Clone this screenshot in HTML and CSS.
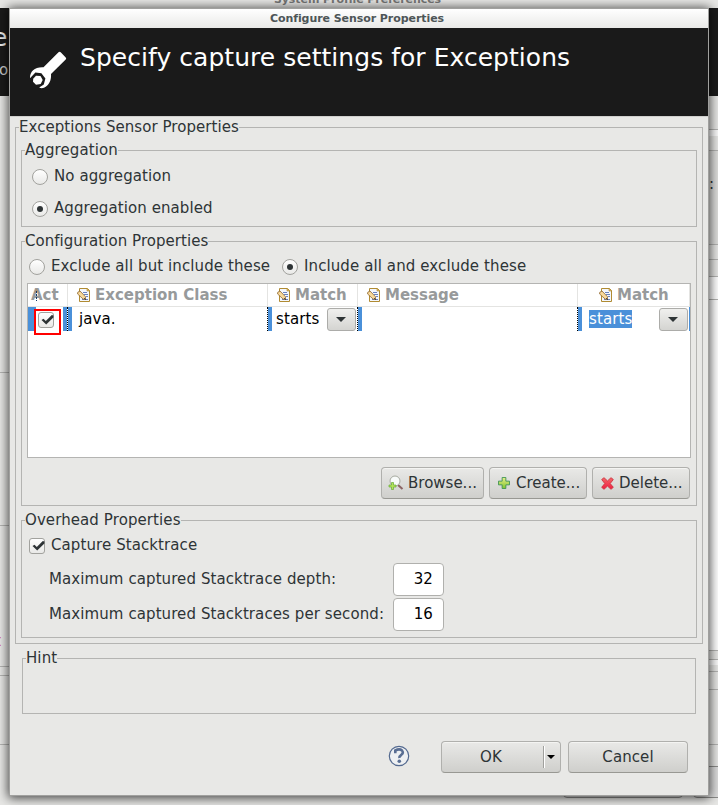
FILE: index.html
```html
<!DOCTYPE html>
<html lang="en">
<head>
<meta charset="utf-8">
<title>Configure Sensor Properties</title>
<link rel="stylesheet" href="styles.css">
</head>
<body>
<svg width="0" height="0" class="defs">
  <defs>
    <linearGradient id="green" x1="0" y1="0" x2="0" y2="1"><stop offset="0" stop-color="#e9ef8c"/><stop offset="1" stop-color="#7fc52c"/></linearGradient>
    <linearGradient id="red" x1="0" y1="0" x2="0" y2="1"><stop offset="0" stop-color="#f4686a"/><stop offset="1" stop-color="#ee1c40"/></linearGradient>
    <symbol id="doc" viewBox="0 0 14 14">
      <path d="M2.500.5h8l2 2v11h-10z" fill="#f4f7fd" stroke="#b08b32"/>
      <path d="M10 .5v2.500h2.500z" fill="#e2bd62" stroke="#b08b32" stroke-width=".6"/>
      <path d="M6 4.500h4M7 6.500h4M9 8.500h2M5 11.500h6" stroke="#6a82bb"/>
      <path d="M.8 4.200l2.200-1.200 5.500 5.800v2.400H6.300L.6 6z" fill="#f8d99a" stroke="#80551d" stroke-width=".7"/>
      <path d="M7.300 10.300l1.400 1.300" stroke="#222"/>
    </symbol>
    <symbol id="check" viewBox="0 0 16 16"><path d="M3.500 8l2-1.200 2.300 2.300 6-6.100 1.600.4v2L8.200 12.500z" fill="#2e3436"/></symbol>
  </defs>
</svg>
<div class="desktop">
  <div class="back-window">
    <div class="back-title">System Profile Preferences</div>
    <div class="back-banner"><span class="back-h">e</span><span class="back-s">o</span></div>
    <div class="back-body">
      <div class="side-left"><i class="l1"></i><i class="l2"></i><b>t</b><i class="l3"></i><i class="l4"></i><i class="l5"></i></div>
      <div class="side-right">
        <i class="r1"></i><i class="r2"></i><i class="r3"></i><i class="r4">:</i><i class="r5"></i><i class="r6"></i><i class="r7"></i><i class="r8"></i><i class="r9"></i><i class="r10"></i><i class="r11"></i><i class="r12"></i><i class="r13"></i><i class="r14"></i>
      </div>
    </div>
    <div class="back-buttons"><span></span><span></span></div>
  </div>

  <main class="dialog">
    <div class="titlebar">Configure Sensor Properties</div>
    <header class="banner">
      <svg class="wrench" width="38" height="38" viewBox="0 0 38 38">
        <path d="M29.500 1.200q1-1 2.200 0l5 5.200q1 1 0 2.200L22 23c.6 6-2 11.500-7 13.700q-2.500.9-4.800-.1l4.600-3.100 1.600-6-4-5.200-6-.7-4 4.200L1 27.200C.8 20 6 15.700 14.500 16.200z" fill="#fff"/>
        <path d="M4.200 27.800L7 24.700l4.500.3 2.200 4-2 4-4.700.7-3-3z" fill="#fff"/>
      </svg>
      <h1>Specify capture settings for Exceptions</h1>
    </header>
    <section class="group sensor">
      <h2>Exceptions Sensor Properties</h2>
      <section class="group aggregation">
        <h2>Aggregation</h2>
        <label class="option"><span class="radio"></span>No aggregation</label>
        <label class="option"><span class="radio on"></span>Aggregation enabled</label>
      </section>
      <section class="group config">
        <h2>Configuration Properties</h2>
        <div class="mode">
          <label class="option"><span class="radio"></span><span class="t1">Exclude all but include these</span></label>
          <label class="option"><span class="radio on"></span>Include all and exclude these</label>
        </div>
        <div class="table">
          <div class="row head">
            <div class="act">Act<svg class="sort" width="5" height="13" viewBox="0 0 5 13"><path d="M.5 4L2.500.5 4.500 4" fill="none" stroke="#c58a45" stroke-width=".6"/><path d="M2.500 2v10" stroke="#173a66" stroke-dasharray="2 1"/></svg></div>
            <div><svg width="14" height="14"><use href="#doc"/></svg>Exception Class</div>
            <div><svg width="14" height="14"><use href="#doc"/></svg>Match</div>
            <div><svg width="14" height="14"><use href="#doc"/></svg>Message</div>
            <div class="last"><svg width="14" height="14"><use href="#doc"/></svg>Match</div>
          </div>
          <div class="row data">
            <div class="c-act"><span class="mark"><span class="checkbox"><svg width="16" height="16"><use href="#check"/></svg></span></span></div>
            <div class="c-class">java.</div>
            <div class="c-match"><span>starts</span><button class="drop"><svg width="10" height="5"><path d="M0 0h10L5 5z"/></svg></button></div>
            <div class="c-msg"></div>
            <div class="c-match2"><span class="selected">starts</span><button class="drop"><svg width="10" height="5"><path d="M0 0h10L5 5z"/></svg></button></div>
          </div>
        </div>
        <div class="actions">
          <button class="btn browse"><svg width="16" height="16" viewBox="0 0 16 16"><path d="M10 10l4.500 4" stroke="#8b6464" stroke-width="2"/><circle cx="7" cy="6" r="5" fill="#f8fbfa" stroke="#a7aaa0"/><path d="M3.500 7.500h2v2.500H8v2H5.500v2.500h-2V12H1v-2h2.500z" fill="#b4e35a" stroke="#66aa38" stroke-width=".7"/></svg><span>Browse...</span></button>
          <button class="btn create"><svg width="12" height="12" viewBox="0 0 13 13"><path d="M4.500.5h4v4h4v4h-4v4h-4v-4h-4v-4h4z" fill="url(#green)" stroke="#409455"/></svg><span>Create...</span></button>
          <button class="btn delete"><svg width="13" height="13" viewBox="0 0 13 13"><path d="M.7 2.500L3 .7l3.500 3.200L10 .7l2.300 1.800L9.200 6.500l3.100 3.800-2.300 2-3.500-3.200L3 12.300l-2.300-2 3.100-3.800z" fill="url(#red)" stroke="#ce3440" stroke-width=".9"/></svg><span>Delete...</span></button>
        </div>
      </section>
      <section class="group overhead">
        <h2>Overhead Properties</h2>
        <label class="option"><span class="checkbox"><svg width="16" height="16"><use href="#check"/></svg></span>Capture Stacktrace</label>
        <div class="fields">
          <label>Maximum captured Stacktrace depth:</label><span class="input">32</span>
          <label>Maximum captured Stacktraces per second:</label><span class="input">16</span>
        </div>
      </section>
    </section>
    <section class="group hint"><h2>Hint</h2></section>
    <footer class="footer">
      <svg class="help" width="22" height="22" viewBox="0 0 22 22"><circle cx="11" cy="11" r="9.700" fill="#eef0f2" stroke="#53698f" stroke-width="1.200"/><path d="M7.300 8.300V5.500q4.200-2.200 6.700 0 2 2.300-.7 4.300-2.100 1.400-1.900 3.200" fill="none" stroke="#596e93" stroke-width="2.600"/><circle cx="11.300" cy="16.200" r="1.800" fill="#596e93"/></svg>
      <button class="btn ok"><span>OK</span><i><svg width="8" height="4"><path d="M0 0h8L4 4z"/></svg></i></button>
      <button class="btn cancel">Cancel</button>
    </footer>
  </main>
</div>
</body>
</html>
```
FILE: styles.css
```css
* { box-sizing: border-box; }
body { margin: 0; width: 718px; height: 805px; overflow: hidden; background: #e7e7e5; color: #2e3436; font: 15px/18px "DejaVu Sans", sans-serif; letter-spacing: .09px; }
svg { display: block; flex: none; }
h1, h2 { margin: 0; font-weight: normal; font-size: inherit; }
button { font: inherit; color: inherit; padding: 0; margin: 0; letter-spacing: inherit; }
.defs { position: absolute; }
.desktop { position: relative; width: 718px; height: 805px; padding: 8px 9px; overflow: hidden; }

/* Window behind the dialog */
.back-window { position: absolute; inset: 0; display: flex; flex-direction: column; }
.back-title { height: 8px; line-height: 0; text-indent: -3px; text-align: center; font-size: 11px; font-weight: bold; color: #777; letter-spacing: -.06px; }
.back-banner { height: 88px; background: #1a1a1a; color: #eee; display: flex; flex-direction: column; }
.back-h { font-size: 25px; line-height: 28px; margin: 16px 0 0 -8px; }
.back-s { line-height: 18px; margin: 9px 0 0 -1px; color: #ccc; }
.back-body { flex: 1; display: flex; justify-content: space-between; min-height: 0; }
.back-body i { display: block; border-bottom: 1px solid #b4b4b2; font-style: normal; }
.side-left { width: 9px; }
.l1 { height: 277px; } .l2 { height: 153px; }
.side-left b { display: block; height: 140px; padding-top: 106px; font-weight: normal; color: #d0364a; text-indent: -5px; }
.side-left .l3 { height: 1px; } .l4 { height: 9px; } .l5 { height: 69px; }
.side-right { width: 10px; }
.r1 { height: 34px; } .side-right .r2 { height: 6px; background: #fafafa; border: 0; } .r3 { height: 15px; }
.r4 { height: 94px; padding-top: 24px; padding-left: 1px; background: #dededc; } .r5 { height: 15px; } .r6 { height: 17px; }
.r7 { height: 23px; background: #fff; } .r8 { height: 351px; background: #fff; } .r9 { height: 9px; }
.side-right .r10 { height: 5px; background: #fafafa; border: 0; } .r11 { height: 7px; } .r12 { height: 18px; } .r13 { height: 55px; } .r14 { height: 23px; }
.back-buttons { display: flex; gap: 10px; height: 39px; padding-left: 563px; }
.back-buttons span { flex: none; width: 120px; height: 32px; border: 1px solid #8c8c8a; border-radius: 4px; background: #ddd; }

/* Dialog */
.dialog { position: relative; width: 700px; height: 788px; border: 1px solid #a0a09e; background: #e8e8e6; box-shadow: 0 1px 10px 1px rgba(0,0,0,.72); }
.titlebar { height: 19px; background: linear-gradient(#fff, #e9e9e7); text-align: center; font-size: 11px; font-weight: bold; line-height: 19px; color: #4d5557; text-indent: -4px; letter-spacing: -.06px; }
.banner { height: 89px; background: #1a1a1a; border-bottom: 1px solid #d0d0ce; display: flex; color: #fff; }
.wrench { margin: 23px 0 0 19px; }
.banner h1 { font-size: 25px; line-height: 30px; margin: 15px 0 0 13px; white-space: nowrap; letter-spacing: .04px; }

.group { border: 1px solid #b4b4b2; }
.group > h2 { width: max-content; height: 18px; line-height: 18px; margin: -10px 0 0 3px; background: #e8e8e6; white-space: nowrap; }
.sensor { width: 688px; height: 517px; margin: 10px 0 0 5px; padding: 0 5px; }
.sensor > h2 { margin-left: -2px; letter-spacing: .05px; }
.aggregation { height: 77px; margin-top: 14px; }
.config { height: 265px; margin-top: 14px; }
.config > h2 { letter-spacing: .04px; }
.overhead { height: 118px; margin-top: 14px; }
.hint { width: 674px; height: 56px; margin: 14px 0 0 12px; }

.option { display: flex; align-items: center; height: 18px; white-space: nowrap; }
.radio { flex: none; width: 16px; height: 16px; margin: 2px 6px 0 0; border: 1px solid #a2a29e; border-radius: 50%; background: linear-gradient(#fff, #e9e9e7); display: grid; place-items: center; }
.on::after { content: ""; width: 6px; height: 6px; border-radius: 50%; background: #2e3436; }
.aggregation .option { margin: 8px 0 0 10px; }
.aggregation .option + .option { margin-top: 14px; }
.mode { display: flex; margin: 7px 0 0 7px; letter-spacing: .1px; }
.mode .t1 { width: 231px; }
.checkbox { flex: none; display: block; width: 16px; height: 16px; border: 1px solid #a2a29e; border-radius: 3px; background: linear-gradient(#fff, #e9e9e7); }
.checkbox svg { margin: -1px; }

.table { width: 664px; height: 175px; margin: 8px 0 0 5px; border: 1px solid #b4b4b2; background: #fff; color: #000; }
.row { display: grid; grid-template-columns: 40px 200px 90px 220px 112px; }
.head { height: 23px; border-bottom: 1px solid #e4e4e2; color: #979a9b; font-weight: bold; letter-spacing: 0; }
.head > div { display: flex; align-items: center; padding-left: 9px; gap: 4px; border-right: 1px solid #e4e4e2; white-space: nowrap; overflow: hidden; }
.head > .act { position: relative; padding-left: 3px; }
.sort { position: absolute; left: 6px; top: 5px; }
.head > .last { padding-left: 21px; }
.data { height: 24px; grid-template-columns: 39px 200px 90px 220px 113px; grid-template-rows: 24px; }
.data > div { display: flex; align-items: center; min-height: 0; }
.data > div + div { border-left: 1px dotted #000; background: linear-gradient(90deg, #4a90d9 4px, #fff 4px); }
.data > .c-act { align-items: flex-start; background: linear-gradient(90deg, #4a90d9 8px, #fff 8px 35px, #4a90d9 35px); }
.mark { flex: none; width: 27px; height: 26px; margin: 2px 0 0 6px; border: 2px solid #f00; padding: 1px 2px; }
.data > .c-class { padding-left: 11px; }
.data > .c-match { padding-left: 8px; }
.data .c-match2 { padding-left: 11px; border-right: 1px solid #4a90d9; }
.c-match span { width: 51px; }
.selected { background: #4a90d9; color: #fff; height: 18px; }
.drop { width: 29px; height: 23px; margin-top: 1px; border: 1px solid #acaca9; border-radius: 3px; background: linear-gradient(#f0f0ee, #d4d4d1); display: grid; place-items: center; fill: #2e3436; }
.drop svg { margin-left: -2px; }
.c-match2 .drop { margin: 1px 1px 0 auto; }

.btn { height: 32px; border: 1px solid #b0b0ad; border-bottom-color: #989893; border-radius: 4px; background: linear-gradient(#e9e9e7, #cfcfcc); box-shadow: inset 0 1px #f4f4f2; display: flex; align-items: center; white-space: nowrap; }
.actions { display: flex; gap: 5px; margin: 9px 0 0 359px; letter-spacing: 0; }
.browse { width: 103px; padding-left: 6px; gap: 4px; }
.create { width: 98px; padding-left: 8px; gap: 6px; }
.delete { width: 98px; padding-left: 8px; gap: 5px; }

.overhead .option { margin: 7px 0 0 7px; }
.overhead .checkbox { margin: 2px 6px 0 0; }
.fields { display: grid; grid-template-columns: 344px 51px; row-gap: 2px; align-items: center; margin: 9px 0 0 27px; white-space: nowrap; }
.fields label { padding-bottom: 1px; }
.input { height: 33px; border: 1px solid #b0b0ad; border-radius: 4px; background: #fff; color: #000; text-align: right; padding: 6px 10px 0 0; }

.footer { display: flex; margin: 27px 0 0 378px; }
.help { margin: 4px 31px 0 0; }
.ok { width: 120px; margin-right: 7px; }
.ok span { width: 101px; padding-left: 38px; text-align: left; }
.ok i { height: 22px; border-left: 1px solid #a0a09d; box-shadow: inset 1px 0 #fff; display: grid; align-items: center; padding-left: 3px; }
.cancel { width: 120px; justify-content: center; }
```
